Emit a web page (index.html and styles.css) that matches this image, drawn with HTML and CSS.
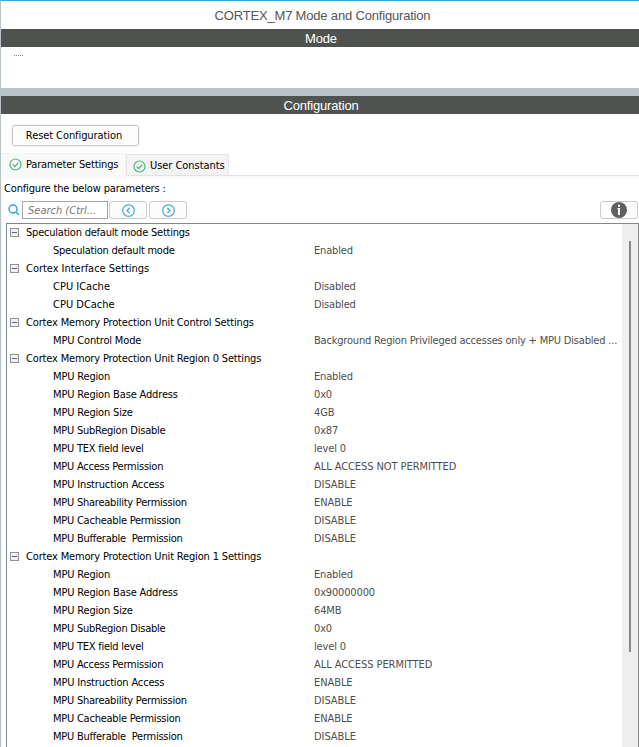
FILE: index.html
```html
<!DOCTYPE html>
<html lang="en">
<head>
<meta charset="utf-8">
<title>CORTEX_M7 Mode and Configuration</title>
<link rel="stylesheet" href="styles.css">
</head>
<body>
<main class="panel">
  <h1 class="title">CORTEX_M7 Mode and Configuration</h1>
  <h2 class="bar">Mode</h2>
  <section class="mode"><span class="dots"></span></section>
  <div class="splitter"></div>
  <h2 class="bar">Configuration</h2>
  <div class="actions"><button class="reset">Reset Configuration</button></div>
  <nav class="tabs">
    <div class="tab active">
      <svg class="check" viewBox="0 0 13 13"><circle cx="6.5" cy="6.5" r="5.5"/><path d="M3.8 6.5l2 2.1 3.6-3.9"/></svg>
      <span>Parameter Settings</span>
    </div>
    <div class="tab">
      <svg class="check" viewBox="0 0 13 13"><circle cx="6.5" cy="6.5" r="5.5"/><path d="M3.8 6.5l2 2.1 3.6-3.9"/></svg>
      <span>User Constants</span>
    </div>
  </nav>
  <section class="content">
    <p class="hint">Configure the below parameters :</p>
    <div class="tools">
      <svg class="lens" viewBox="0 0 12 12"><circle cx="5" cy="5" r="4"/><path d="M8 8l3 3"/></svg>
      <div class="search">Search (Ctrl...</div>
      <button class="tool"><svg class="arrow" viewBox="0 0 13 13"><circle cx="6.5" cy="6.5" r="5.8"/><path d="M7.7 3.9L5 6.5l2.7 2.6"/></svg></button>
      <button class="tool"><svg class="arrow" viewBox="0 0 13 13"><circle cx="6.5" cy="6.5" r="5.8"/><path d="M5.3 3.9L8 6.5 5.3 9.1"/></svg></button>
      <button class="tool info"><svg viewBox="0 0 16 16"><circle cx="8" cy="8" r="8"/><path d="M7 2.8h2v2H7zM6.4 6H9v7H7V7h-.6z"/></svg></button>
    </div>
    <div class="table">
      <div class="rows">
        <div class="group g1"><i></i><span>Speculation default mode Settings</span></div>
        <div class="row"><span class="tight">Speculation default mode</span><span>Enabled</span></div>
        <div class="group g2"><i></i><span>Cortex Interface Settings</span></div>
        <div class="row"><span class="wide">CPU ICache</span><span>Disabled</span></div>
        <div class="row"><span class="wide">CPU DCache</span><span>Disabled</span></div>
        <div class="group g3"><i></i><span>Cortex Memory Protection Unit Control Settings</span></div>
        <div class="row"><span>MPU Control Mode</span><span class="long">Background Region Privileged accesses only + MPU Disabled ...</span></div>
        <div class="group g3"><i></i><span>Cortex Memory Protection Unit Region 0 Settings</span></div>
        <div class="row"><span>MPU Region</span><span>Enabled</span></div>
        <div class="row"><span>MPU Region Base Address</span><span>0x0</span></div>
        <div class="row"><span>MPU Region Size</span><span>4GB</span></div>
        <div class="row"><span class="tight">MPU SubRegion Disable</span><span>0x87</span></div>
        <div class="row"><span class="tight">MPU TEX field level</span><span>level 0</span></div>
        <div class="row"><span class="tight">MPU Access Permission</span><span class="caps">ALL ACCESS NOT PERMITTED</span></div>
        <div class="row"><span>MPU Instruction Access</span><span class="caps">DISABLE</span></div>
        <div class="row"><span class="tight">MPU Shareability Permission</span><span class="caps">ENABLE</span></div>
        <div class="row"><span class="tight">MPU Cacheable Permission</span><span class="caps">DISABLE</span></div>
        <div class="row"><span class="tight">MPU Bufferable  Permission</span><span class="caps">DISABLE</span></div>
        <div class="group g3"><i></i><span>Cortex Memory Protection Unit Region 1 Settings</span></div>
        <div class="row"><span>MPU Region</span><span>Enabled</span></div>
        <div class="row"><span>MPU Region Base Address</span><span>0x90000000</span></div>
        <div class="row"><span>MPU Region Size</span><span>64MB</span></div>
        <div class="row"><span class="tight">MPU SubRegion Disable</span><span>0x0</span></div>
        <div class="row"><span class="tight">MPU TEX field level</span><span>level 0</span></div>
        <div class="row"><span class="tight">MPU Access Permission</span><span class="caps">ALL ACCESS PERMITTED</span></div>
        <div class="row"><span>MPU Instruction Access</span><span class="caps">ENABLE</span></div>
        <div class="row"><span class="tight">MPU Shareability Permission</span><span class="caps">DISABLE</span></div>
        <div class="row"><span class="tight">MPU Cacheable Permission</span><span class="caps">ENABLE</span></div>
        <div class="row"><span class="tight">MPU Bufferable  Permission</span><span class="caps">DISABLE</span></div>
      </div>
      <div class="scroll"><div class="thumb"></div></div>
    </div>
  </section>
</main>
</body>
</html>
```
FILE: styles.css
```css
* { box-sizing: border-box; }
body {
  margin: 0;
  height: 747px;
  overflow: hidden;
  background: #fff;
  color: #000;
  font: 11px/18px "DejaVu Sans Condensed", "DejaVu Sans", sans-serif;
  font-stretch: condensed;
  letter-spacing: -0.16px;
}
svg { display: block; flex: none; fill: none; }
button { font: inherit; color: inherit; padding: 0; }
.panel {
  height: 747px;
  display: flex;
  flex-direction: column;
  border-top: 1px solid #3ba5da;
  border-left: 1px solid #b9c4ca;
}
.title, .bar {
  margin: 0;
  font: 13px/18px "Liberation Sans", Arial, sans-serif;
  letter-spacing: -0.18px;
  text-align: center;
  flex: none;
}
.title { height: 28px; line-height: 29px; color: #53565a; padding-left: 5px; }
.bar { height: 18px; background: #505250; color: #fff; padding-left: 2px; line-height: 19px; }
.mode { height: 41px; padding: 8px 13px; flex: none; }
.dots {
  display: block;
  width: 9px;
  height: 1px;
  background: repeating-linear-gradient(90deg, #888 0 1px, #fff 1px 2px);
}
.splitter { height: 8px; background: #b9c4ca; flex: none; }
.actions { height: 39px; padding: 11px 0 0 11px; flex: none; }
.reset {
  display: block;
  width: 127px;
  height: 21px;
  border: 1px solid #c6c6c6;
  border-radius: 3px;
  background: #fdfdfd;
  outline: 1px solid #f3f3f3;
  line-height: 19px;
  padding-right: 3px;
  letter-spacing: -0.08px;
}
.tabs {
  height: 23px;
  flex: none;
  display: flex;
  align-items: flex-end;
  border-bottom: 1px solid #e2e2e2;
}
.tab {
  width: 103px;
  height: 21px;
  display: flex;
  align-items: center;
  gap: 4px;
  padding: 2px 0 0 6px;
  letter-spacing: -0.05px;
  background: #f3f3f3;
  border: 1px solid #e6e6e6;
  border-bottom: 0;
  white-space: nowrap;
}
.tab.active {
  width: 125px;
  height: 23px;
  margin-bottom: -1px;
  padding: 0 0 1px 7px;
  letter-spacing: -0.16px;
  background: #f9f9f9;
  border-color: #f3f3f3;
}
.check { width: 13px; height: 13px; stroke: #45b878; stroke-width: 1.2; }
.content {
  flex: 1;
  min-height: 0;
  display: flex;
  flex-direction: column;
  border-top: 3px solid #f9f9f9;
  border-left: 1px solid #f5f5f5;
}
.hint { margin: 0; height: 22px; line-height: 19px; padding-left: 2px; flex: none; }
.tools { height: 18px; display: flex; align-items: center; padding: 0 1px 0 6px; flex: none; }
.lens { width: 12px; height: 12px; margin-right: 2px; stroke: #2ba0da; stroke-width: 1.4; }
.search {
  width: 86px;
  height: 18px;
  border: 1px solid #a5a5a5;
  padding-left: 5px;
  line-height: 17px;
  font-style: italic;
  letter-spacing: 0;
  color: #777;
  white-space: nowrap;
}
.tool {
  width: 38px;
  height: 18px;
  margin-left: 1px;
  display: flex;
  align-items: center;
  justify-content: center;
  border: 1px solid #cbcbcb;
  border-radius: 3px;
  background: #fcfcfc;
}
.tool + .tool { margin-left: 2px; }
.tool.info { margin-left: auto; }
.arrow { width: 13px; height: 13px; stroke: #2ba0da; stroke-width: 1.1; }
.info svg { width: 16px; height: 16px; fill: #fff; }
.info circle { fill: #606060; }
.table {
  flex: 1;
  min-height: 0;
  margin: 4px 0 0 4px;
  display: flex;
  border: 1px solid #83878f;
  border-bottom: 0;
  overflow: hidden;
}
.rows { flex: 1; min-width: 0; margin-top: -1px; }
.group, .row { height: 18px; display: flex; align-items: center; white-space: pre; }
.group span, .row span { padding-top: 2px; line-height: 16px; }
.group { padding-left: 3px; }
.g1 { letter-spacing: -0.22px; }
.g2 { letter-spacing: -0.03px; }
.group i {
  width: 9px;
  height: 9px;
  margin-right: 7px;
  border: 1px solid #919191;
  background: linear-gradient(#4b63a7, #4b63a7) center / 5px 1px no-repeat, #f2f2f2;
}
.row { padding-left: 46px; }
.row span:first-child { width: 261px; }
.row span:last-child { color: #4e4e4e; }
.row .tight { letter-spacing: -0.24px; }
.row .wide { letter-spacing: 0; }
.row .caps { letter-spacing: -0.07px; }
.row .long { letter-spacing: -0.19px; }
.scroll { width: 16px; flex: none; background: #eee; padding: 17px 0 0 7px; }
.thumb { width: 2px; height: 411px; background: #868686; }
```
